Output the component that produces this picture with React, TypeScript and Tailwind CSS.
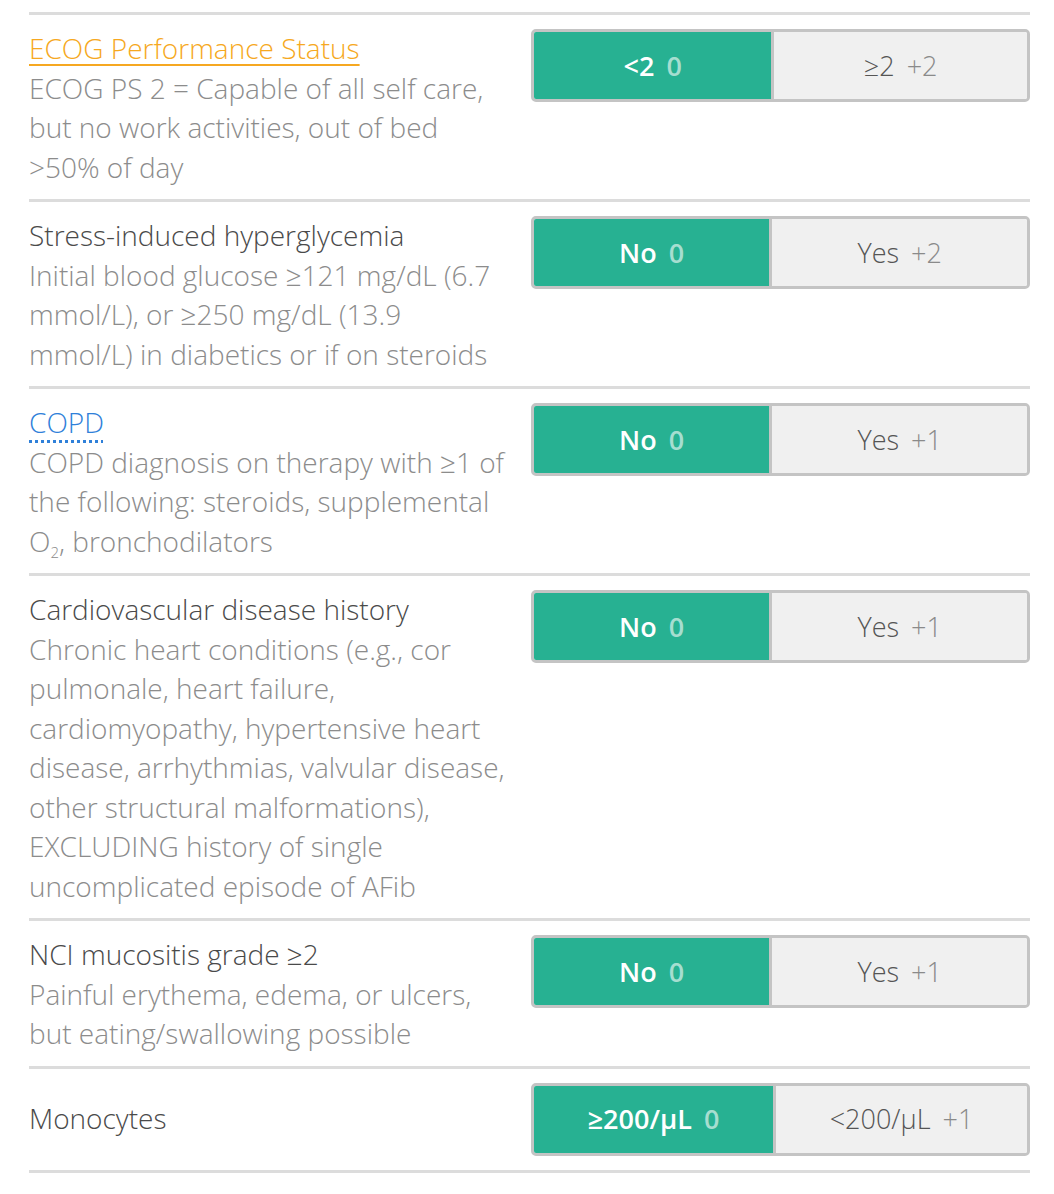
import type { ReactNode } from 'react';

interface Option {
  label: ReactNode;
  points: string;
  selected?: boolean;
}

interface Criterion {
  title: ReactNode;
  description?: ReactNode;
  options: [Option, Option];
}

const criteria: Criterion[] = [
  {
    title: (
      <span className="text-[#f6a821] underline decoration-[2px] underline-offset-[5px]">
        ECOG Performance Status
      </span>
    ),
    description: 'ECOG PS 2 = Capable of all self care, but no work activities, out of bed >50% of day',
    options: [
      { label: '<2', points: '0', selected: true },
      { label: '≥2', points: '+2' }
    ]
  },
  {
    title: 'Stress-induced hyperglycemia',
    description: 'Initial blood glucose ≥121 mg/dL (6.7 mmol/L), or ≥250 mg/dL (13.9 mmol/L) in diabetics or if on steroids',
    options: [
      { label: 'No', points: '0', selected: true },
      { label: 'Yes', points: '+2' }
    ]
  },
  {
    title: (
      <span className="text-[#2f80d9] underline decoration-dotted decoration-[3px] underline-offset-[7px]">COPD</span>
    ),
    description: (
      <>
        COPD diagnosis on therapy with ≥1 of the following: steroids, supplemental O
        <sub className="bottom-[-6px] text-[15px] leading-none">2</sub>, bronchodilators
      </>
    ),
    options: [
      { label: 'No', points: '0', selected: true },
      { label: 'Yes', points: '+1' }
    ]
  },
  {
    title: 'Cardiovascular disease history',
    description:
      'Chronic heart conditions (e.g., cor pulmonale, heart failure, cardiomyopathy, hypertensive heart disease, arrhythmias, valvular disease, other structural malformations), EXCLUDING history of single uncomplicated episode of AFib',
    options: [
      { label: 'No', points: '0', selected: true },
      { label: 'Yes', points: '+1' }
    ]
  },
  {
    title: 'NCI mucositis grade ≥2',
    description: 'Painful erythema, edema, or ulcers, but eating/swallowing possible',
    options: [
      { label: 'No', points: '0', selected: true },
      { label: 'Yes', points: '+1' }
    ]
  },
  {
    title: 'Monocytes',
    options: [
      { label: '≥200/µL', points: '0', selected: true },
      { label: '<200/µL', points: '+1' }
    ]
  }
];

function Toggle({ options }: { options: [Option, Option] }) {
  return (
    <div className="flex h-[73px] w-[499px] shrink-0 overflow-hidden rounded-[5px] border-[3px] border-[#c4c4c4] text-[27px]">
      {options.map((option, index) => (
        <div
          key={index}
          className={
            option.selected
              ? 'flex flex-auto items-center justify-center gap-[12px] bg-[#27b192] font-semibold text-white'
              : 'flex flex-auto items-center justify-center gap-[12px] border-l-[3px] border-[#c4c4c4] bg-[#f0f0f0] text-[#555]'
          }
        >
          <span>{option.label}</span>
          <span className={option.selected ? 'text-[#a6ded0]' : 'text-[#8a8a8a]'}>{option.points}</span>
        </div>
      ))}
    </div>
  );
}

export default function App() {
  return (
    <div
      className="bg-white pt-[12px] pl-[29px] pr-[24px] text-[28px] leading-[39.5px] font-light"
      style={{ fontFamily: '"Open Sans", "Noto Sans", sans-serif' }}
    >
      {criteria.map((criterion, index) => {
        const last = index === criteria.length - 1;
        return (
          <div
            key={index}
            className={
              last
                ? 'flex items-center justify-between border-y-[3px] border-[#dcdcdc] pt-[14px] pb-[14px]'
                : 'flex items-start justify-between border-t-[3px] border-[#dcdcdc] pt-[14px] pb-[12px]'
            }
          >
            <div className="w-[480px] shrink-0">
              <div className="text-[#4a4a4a]">{criterion.title}</div>
              {criterion.description && <div className="text-[#8c8c8c]">{criterion.description}</div>}
            </div>
            <Toggle options={criterion.options} />
          </div>
        );
      })}
    </div>
  );
}
